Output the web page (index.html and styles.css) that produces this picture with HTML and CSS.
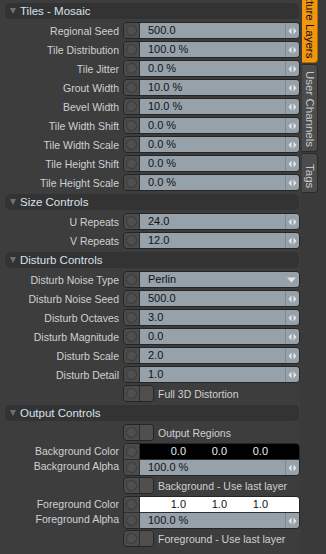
FILE: index.html
```html
<!DOCTYPE html>
<html lang="en">
<head>
  <meta charset="UTF-8">
  <title>Tiles - Mosaic</title>
  <link rel="stylesheet" href="styles.css">
</head>
<body>

<div class="app">
  <div class="panel">

    <!-- Tiles -->
    <div class="section"><span class="tri"></span>Tiles - Mosaic</div>
    <div class="row"><span class="lbl">Regional Seed</span><div class="ctl"><span class="knob"><i></i></span><div class="field">500.0</div><span class="spin"><svg width="9" height="8" viewBox="0 0 9 8"><path d="M3.5 0.5 L0.5 4 L3.5 7.5 Z M5.5 0.5 L8.5 4 L5.5 7.5 Z"/></svg></span></div></div>
    <div class="row"><span class="lbl">Tile Distribution</span><div class="ctl"><span class="knob"><i></i></span><div class="field">100.0 %</div><span class="spin"><svg width="9" height="8" viewBox="0 0 9 8"><path d="M3.5 0.5 L0.5 4 L3.5 7.5 Z M5.5 0.5 L8.5 4 L5.5 7.5 Z"/></svg></span></div></div>
    <div class="row"><span class="lbl">Tile Jitter</span><div class="ctl"><span class="knob"><i></i></span><div class="field">0.0 %</div><span class="spin"><svg width="9" height="8" viewBox="0 0 9 8"><path d="M3.5 0.5 L0.5 4 L3.5 7.5 Z M5.5 0.5 L8.5 4 L5.5 7.5 Z"/></svg></span></div></div>
    <div class="row"><span class="lbl">Grout Width</span><div class="ctl"><span class="knob"><i></i></span><div class="field">10.0 %</div><span class="spin"><svg width="9" height="8" viewBox="0 0 9 8"><path d="M3.5 0.5 L0.5 4 L3.5 7.5 Z M5.5 0.5 L8.5 4 L5.5 7.5 Z"/></svg></span></div></div>
    <div class="row"><span class="lbl">Bevel Width</span><div class="ctl"><span class="knob"><i></i></span><div class="field">10.0 %</div><span class="spin"><svg width="9" height="8" viewBox="0 0 9 8"><path d="M3.5 0.5 L0.5 4 L3.5 7.5 Z M5.5 0.5 L8.5 4 L5.5 7.5 Z"/></svg></span></div></div>
    <div class="row"><span class="lbl">Tile Width Shift</span><div class="ctl"><span class="knob"><i></i></span><div class="field">0.0 %</div><span class="spin"><svg width="9" height="8" viewBox="0 0 9 8"><path d="M3.5 0.5 L0.5 4 L3.5 7.5 Z M5.5 0.5 L8.5 4 L5.5 7.5 Z"/></svg></span></div></div>
    <div class="row"><span class="lbl">Tile Width Scale</span><div class="ctl"><span class="knob"><i></i></span><div class="field">0.0 %</div><span class="spin"><svg width="9" height="8" viewBox="0 0 9 8"><path d="M3.5 0.5 L0.5 4 L3.5 7.5 Z M5.5 0.5 L8.5 4 L5.5 7.5 Z"/></svg></span></div></div>
    <div class="row"><span class="lbl">Tile Height Shift</span><div class="ctl"><span class="knob"><i></i></span><div class="field">0.0 %</div><span class="spin"><svg width="9" height="8" viewBox="0 0 9 8"><path d="M3.5 0.5 L0.5 4 L3.5 7.5 Z M5.5 0.5 L8.5 4 L5.5 7.5 Z"/></svg></span></div></div>
    <div class="row"><span class="lbl">Tile Height Scale</span><div class="ctl"><span class="knob"><i></i></span><div class="field">0.0 %</div><span class="spin"><svg width="9" height="8" viewBox="0 0 9 8"><path d="M3.5 0.5 L0.5 4 L3.5 7.5 Z M5.5 0.5 L8.5 4 L5.5 7.5 Z"/></svg></span></div></div>

    <!-- Size -->
    <div class="section"><span class="tri"></span>Size Controls</div>
    <div class="row"><span class="lbl">U Repeats</span><div class="ctl"><span class="knob"><i></i></span><div class="field">24.0</div><span class="spin"><svg width="9" height="8" viewBox="0 0 9 8"><path d="M3.5 0.5 L0.5 4 L3.5 7.5 Z M5.5 0.5 L8.5 4 L5.5 7.5 Z"/></svg></span></div></div>
    <div class="row"><span class="lbl">V Repeats</span><div class="ctl"><span class="knob"><i></i></span><div class="field">12.0</div><span class="spin"><svg width="9" height="8" viewBox="0 0 9 8"><path d="M3.5 0.5 L0.5 4 L3.5 7.5 Z M5.5 0.5 L8.5 4 L5.5 7.5 Z"/></svg></span></div></div>

    <!-- Disturb -->
    <div class="section"><span class="tri"></span>Disturb Controls</div>
    <div class="row"><span class="lbl">Disturb Noise Type</span><div class="ctl"><span class="knob"><i></i></span><div class="field">Perlin</div><span class="drop"><svg width="9" height="6" viewBox="0 0 9 6"><path d="M0 0.5 L9 0.5 L4.5 5.5 Z"/></svg></span></div></div>
    <div class="row"><span class="lbl">Disturb Noise Seed</span><div class="ctl"><span class="knob"><i></i></span><div class="field">500.0</div><span class="spin"><svg width="9" height="8" viewBox="0 0 9 8"><path d="M3.5 0.5 L0.5 4 L3.5 7.5 Z M5.5 0.5 L8.5 4 L5.5 7.5 Z"/></svg></span></div></div>
    <div class="row"><span class="lbl">Disturb Octaves</span><div class="ctl"><span class="knob"><i></i></span><div class="field">3.0</div><span class="spin"><svg width="9" height="8" viewBox="0 0 9 8"><path d="M3.5 0.5 L0.5 4 L3.5 7.5 Z M5.5 0.5 L8.5 4 L5.5 7.5 Z"/></svg></span></div></div>
    <div class="row"><span class="lbl">Disturb Magnitude</span><div class="ctl"><span class="knob"><i></i></span><div class="field">0.0</div><span class="spin"><svg width="9" height="8" viewBox="0 0 9 8"><path d="M3.5 0.5 L0.5 4 L3.5 7.5 Z M5.5 0.5 L8.5 4 L5.5 7.5 Z"/></svg></span></div></div>
    <div class="row"><span class="lbl">Disturb Scale</span><div class="ctl"><span class="knob"><i></i></span><div class="field">2.0</div><span class="spin"><svg width="9" height="8" viewBox="0 0 9 8"><path d="M3.5 0.5 L0.5 4 L3.5 7.5 Z M5.5 0.5 L8.5 4 L5.5 7.5 Z"/></svg></span></div></div>
    <div class="row"><span class="lbl">Disturb Detail</span><div class="ctl"><span class="knob"><i></i></span><div class="field">1.0</div><span class="spin"><svg width="9" height="8" viewBox="0 0 9 8"><path d="M3.5 0.5 L0.5 4 L3.5 7.5 Z M5.5 0.5 L8.5 4 L5.5 7.5 Z"/></svg></span></div></div>
    <div class="row"><span class="lbl"></span><div class="check"><span class="toggle"><span class="knob"><i></i></span><span class="half"></span></span>Full 3D Distortion</div></div>

    <!-- Output -->
    <div class="section"><span class="tri"></span>Output Controls</div>
    <div class="row"><span class="lbl"></span><div class="check"><span class="toggle"><span class="knob"><i></i></span><span class="half"></span></span>Output Regions</div></div>

    <div class="group">
      <div class="lbls"><span>Background Color</span><span>Background Alpha</span></div>
      <div class="ctl2">
        <div class="line"><span class="knob"><i></i></span><div class="color black"><span>0.0</span><span>0.0</span><span>0.0</span></div></div>
        <div class="line"><span class="knob"><i></i></span><div class="field">100.0 %</div><span class="spin"><svg width="9" height="8" viewBox="0 0 9 8"><path d="M3.5 0.5 L0.5 4 L3.5 7.5 Z M5.5 0.5 L8.5 4 L5.5 7.5 Z"/></svg></span></div>
      </div>
    </div>
    <div class="row"><span class="lbl"></span><div class="check"><span class="toggle"><span class="knob"><i></i></span><span class="half"></span></span>Background - Use last layer</div></div>

    <div class="group">
      <div class="lbls"><span>Foreground Color</span><span>Foreground Alpha</span></div>
      <div class="ctl2">
        <div class="line"><span class="knob"><i></i></span><div class="color white"><span>1.0</span><span>1.0</span><span>1.0</span></div></div>
        <div class="line"><span class="knob"><i></i></span><div class="field">100.0 %</div><span class="spin"><svg width="9" height="8" viewBox="0 0 9 8"><path d="M3.5 0.5 L0.5 4 L3.5 7.5 Z M5.5 0.5 L8.5 4 L5.5 7.5 Z"/></svg></span></div>
      </div>
    </div>
    <div class="row"><span class="lbl"></span><div class="check"><span class="toggle"><span class="knob"><i></i></span><span class="half"></span></span>Foreground - Use last layer</div></div>

  </div>

  <div class="tabs">
    <div class="tab active"><span>Texture Layers</span></div>
    <div class="tab user"><span>User Channels</span></div>
    <div class="tab tags"><span>Tags</span></div>
  </div>
</div>

</body>
</html>
```

FILE: styles.css
```css
html, body {
  margin: 0;
  padding: 0;
  background: #3d3d3d;
}
body {
  font-family: "Liberation Sans", Arial, sans-serif;
  font-size: 10.5px;
  color: #cfd1d3;
}
.app {
  display: flex;
  width: 326px;
  height: 554px;
  overflow: hidden;
  background: #3d3d3d;
}
.panel {
  width: 301px;
  padding-top: 1px;
}

/* section headers */
.section {
  display: flex;
  align-items: center;
  height: 16px;
  margin: 2px 1px 2px 5px;
  padding-left: 5px;
  background: #333333;
  border-radius: 5px;
  color: #d8e2ec;
  font-size: 11.5px;
}
.tri {
  width: 0;
  height: 0;
  margin-right: 4px;
  border-left: 3.5px solid transparent;
  border-right: 3.5px solid transparent;
  border-top: 6px solid #6e7378;
}

/* rows */
.row {
  display: flex;
  align-items: center;
  height: 19px;
}
.lbl {
  width: 119px;
  text-align: right;
  margin-right: 4px;
  white-space: nowrap;
}
.ctl {
  display: flex;
  width: 175px;
  height: 15px;
  border: 1px solid #252525;
  border-radius: 4px;
  overflow: hidden;
}
.knob {
  display: flex;
  align-items: center;
  justify-content: center;
  width: 15px;
  flex: none;
  background: #4b4b4b;
  border-right: 1px solid #2e2e2e;
}
.knob i {
  width: 9px;
  height: 9px;
  border-radius: 50%;
  border: 1px solid #3a3a3a;
  background: #4f4f4f;
}
.field {
  flex: 1;
  background: #97a1aa;
  color: #101418;
  padding-left: 8px;
  line-height: 15px;
  font-size: 11px;
}
.spin, .drop {
  display: flex;
  align-items: center;
  justify-content: center;
  width: 13px;
  background: #97a1aa;
  border-left: 1px solid #7f8890;
}
.drop {
  border-left: none;
  width: 16px;
}
.spin svg, .drop svg {
  fill: #e2e6ea;
}

/* toggles */
.check {
  display: flex;
  align-items: center;
  margin-left: 123px;
}
.row .lbl:empty {
  display: none;
}
.toggle {
  display: flex;
  width: 29px;
  height: 15px;
  margin-right: 4px;
  border: 1px solid #252525;
  border-radius: 4px;
  overflow: hidden;
}
.half {
  flex: 1;
  background: #4f4f4f;
}

/* colour groups */
.group {
  display: flex;
  height: 34px;
  padding-top: 1px;
  box-sizing: border-box;
}
.lbls {
  display: flex;
  flex-direction: column;
  width: 119px;
  margin-right: 4px;
  text-align: right;
}
.lbls span {
  height: 15px;
  line-height: 16px;
  white-space: nowrap;
}
.ctl2 {
  display: flex;
  flex-direction: column;
  width: 175px;
  height: 31px;
  border: 1px solid #252525;
  border-radius: 4px;
  overflow: hidden;
}
.line {
  display: flex;
  height: 15px;
}
.line + .line {
  border-top: 1px solid #2e2e2e;
}
.color {
  flex: 1;
  display: grid;
  grid-template-columns: 41px 41px 41px;
  padding-left: 5px;
  line-height: 15px;
  font-size: 11px;
}
.color span {
  text-align: right;
}
.black {
  background: #000;
  color: #e8ecf0;
}
.white {
  background: #fff;
  color: #101010;
}

/* side tabs */
.tabs {
  display: flex;
  flex-direction: column;
  width: 25px;
  padding-left: 2px;
  background: #3a3a3a;
}
.tab {
  display: flex;
  flex-direction: column;
  justify-content: flex-end;
  align-items: center;
  width: 15px;
  overflow: hidden;
  background: #4c4c4c;
  border: 1px solid #2a2a2a;
  border-left: none;
  border-radius: 0 4px 4px 0;
  color: #c4c8cc;
  margin-bottom: 1px;
}
.tab span {
  writing-mode: vertical-rl;
  white-space: nowrap;
  padding-bottom: 4px;
  font-size: 11.5px;
}
.tab.active {
  height: 62px;
  background: #f2960f;
  color: #111;
  border-color: #b36a00;
  border-top: none;
  border-radius: 0 0 4px 0;
}
.tab.user {
  height: 86px;
}
.tab.tags {
  height: 38px;
}
```
